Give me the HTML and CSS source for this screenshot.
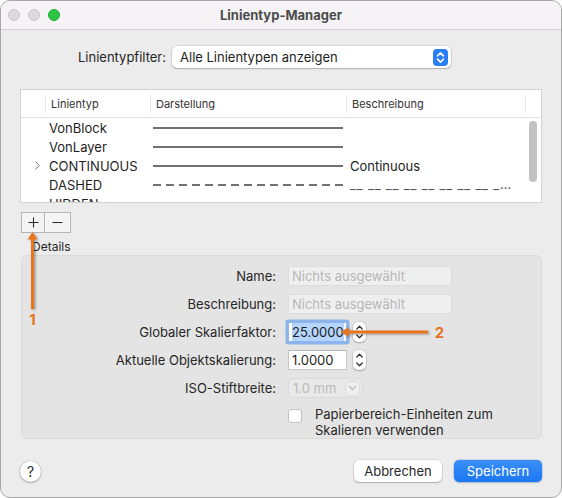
FILE: index.html
```html
<!DOCTYPE html>
<html lang="de">
<head>
<meta charset="utf-8">
<title>Linientyp-Manager</title>
<link rel="stylesheet" href="styles.css">
</head>
<body>
<div class="window">
  <div class="titlebar">
    <div class="lights">
      <span class="light gray"></span>
      <span class="light gray"></span>
      <span class="light green"></span>
    </div>
    <div class="title">Linientyp-Manager</div>
  </div>

  <div class="content">
    <div class="filter">
      <span class="filter-label">Linientypfilter:</span>
      <div class="popup">
        <span>Alle Linientypen anzeigen</span>
        <svg class="popup-btn" width="15" height="17" viewBox="0 0 15 17"><rect width="15" height="17" rx="4" fill="#2b7ff6"/><path d="M4.5 6.8 L7.5 3.9 L10.5 6.8 M4.5 10.2 L7.5 13.1 L10.5 10.2" fill="none" stroke="#fff" stroke-width="1.6" stroke-linecap="round" stroke-linejoin="round"/></svg>
      </div>
    </div>

    <div class="table">
      <div class="thead">
        <div class="th first"></div>
        <div class="th">Linientyp</div>
        <div class="th">Darstellung</div>
        <div class="th">Beschreibung</div>
        <div class="th last"></div>
      </div>
      <div class="tbody">
        <div class="rows">
          <div class="row">
            <div class="cell"></div>
            <div class="cell name">VonBlock</div>
            <div class="cell"><span class="sample solid"></span></div>
            <div class="cell desc"></div>
          </div>
          <div class="row">
            <div class="cell"></div>
            <div class="cell name">VonLayer</div>
            <div class="cell"><span class="sample solid"></span></div>
            <div class="cell desc"></div>
          </div>
          <div class="row">
            <div class="cell chev"><svg width="5" height="9" viewBox="0 0 5 9"><path d="M0.6 0.6 L4.2 4.5 L0.6 8.4" fill="none" stroke="#6e6e6e" stroke-width="1"/></svg></div>
            <div class="cell name">CONTINUOUS</div>
            <div class="cell"><span class="sample solid"></span></div>
            <div class="cell desc">Continuous</div>
          </div>
          <div class="row">
            <div class="cell"></div>
            <div class="cell name">DASHED</div>
            <div class="cell"><span class="sample dashed"></span></div>
            <div class="cell desc dashdesc">__ __ __ __ __ __ __ __ _…</div>
          </div>
          <div class="row">
            <div class="cell"></div>
            <div class="cell name">HIDDEN</div>
            <div class="cell"></div>
            <div class="cell desc"></div>
          </div>
        </div>
        <div class="scroll"><div class="thumb"></div></div>
      </div>
    </div>

    <div class="seg">
      <div class="seg-btn plus"><svg width="11" height="11" viewBox="0 0 11 11"><path d="M5.5 0.5 V10.5 M0.5 5.5 H10.5" stroke="#2a2a2a" stroke-width="1.1"/></svg></div>
      <div class="seg-btn minus"><svg width="11" height="11" viewBox="0 0 11 11"><path d="M0.5 5.5 H10.5" stroke="#2a2a2a" stroke-width="1.1"/></svg></div>
    </div>

    <div class="details-label">Details</div>

    <div class="details">
      <div class="label">Name:</div>
      <div class="field"><div class="input disabled wide">Nichts ausgewählt</div></div>

      <div class="label">Beschreibung:</div>
      <div class="field"><div class="input disabled wide">Nichts ausgewählt</div></div>

      <div class="label">Globaler Skalierfaktor:</div>
      <div class="field">
        <div class="input num focus"><span class="sel">25.0000</span></div>
        <svg class="stepper" width="13" height="20" viewBox="0 0 13 20"><path d="M3.8 7 L6.5 4.3 L9.2 7 M3.8 13 L6.5 15.7 L9.2 13" fill="none" stroke="#333" stroke-width="1.3" stroke-linecap="round" stroke-linejoin="round"/></svg>
      </div>

      <div class="label">Aktuelle Objektskalierung:</div>
      <div class="field">
        <div class="input num">1.0000</div>
        <svg class="stepper" width="13" height="20" viewBox="0 0 13 20"><path d="M3.8 7 L6.5 4.3 L9.2 7 M3.8 13 L6.5 15.7 L9.2 13" fill="none" stroke="#333" stroke-width="1.3" stroke-linecap="round" stroke-linejoin="round"/></svg>
      </div>

      <div class="label">ISO-Stiftbreite:</div>
      <div class="field">
        <div class="iso">
          <span>1.0 mm</span>
          <span class="iso-btn"><svg width="9" height="6" viewBox="0 0 9 6"><path d="M1 1 L4.5 4.5 L8 1" fill="none" stroke="#b9b9b9" stroke-width="1.2"/></svg></span>
        </div>
      </div>

      <div class="label"></div>
      <div class="field check-row">
        <span class="checkbox"></span>
        <span class="check-label">Papierbereich-Einheiten zum<br>Skalieren verwenden</span>
      </div>
    </div>

    <div class="footer">
      <div class="help">?</div>
      <div class="actions">
        <div class="btn">Abbrechen</div>
        <div class="btn primary">Speichern</div>
      </div>
    </div>
  </div>

  <svg class="annotations" width="562" height="498" viewBox="0 0 562 498">
    <defs>
      <filter id="sh" x="-50%" y="-50%" width="200%" height="200%">
        <feDropShadow dx="1.5" dy="1" stdDeviation="1" flood-color="#000" flood-opacity="0.35"/>
      </filter>
    </defs>
    <g filter="url(#sh)" fill="#e8741e" stroke="none">
      <rect x="31" y="237" width="3" height="72"/>
      <polygon points="32.5,232 27.5,239.5 37.5,239.5"/>
      <rect x="347" y="330.5" width="81" height="3"/>
      <polygon points="341,332 348.5,327 348.5,337"/>
    </g>
    <text x="32.5" y="325" class="ann-num" text-anchor="middle">1</text>
    <text x="439.5" y="338" class="ann-num" text-anchor="middle">2</text>
  </svg>
</div>
</body>
</html>
```

FILE: styles.css
```css
* { box-sizing: border-box; }

html, body {
  margin: 0;
  padding: 0;
  background: #ffffff;
}

body {
  font-family: "Inter", "Liberation Sans", sans-serif;
  font-size: 13px;
  color: #262626;
}

.window {
  position: relative;
  width: 562px;
  height: 498px;
  border: 1px solid #a8a8a8;
  border-radius: 10px;
  overflow: hidden;
  background: #ececec;
}

.titlebar {
  position: relative;
  height: 29px;
  background: #f5f3f5;
  border-bottom: 1px solid #d3d1d3;
  display: flex;
  align-items: center;
  justify-content: center;
}

.lights {
  position: absolute;
  left: 7px;
  top: 8px;
  display: flex;
  gap: 8px;
}

.light {
  width: 12px;
  height: 12px;
  border-radius: 50%;
  display: block;
}

.light.gray {
  background: #dcdadc;
  border: 1px solid #c9c7c9;
}

.light.green {
  background: #2bc541;
  border: 1px solid #22ad36;
}

.title {
  font-weight: 700;
  font-size: 13px;
  color: #4b4b4b;
}

.content {
  padding: 0 19px 0 19px;
}

/* filter */
.filter {
  display: flex;
  align-items: center;
  gap: 6px;
  margin: 16px 0 0 58px;
}

.filter-label {
  color: #262626;
}

.popup {
  width: 279px;
  height: 22px;
  background: #fff;
  border-radius: 5px;
  box-shadow: 0 0 0 0.5px rgba(0,0,0,0.18), 0 1px 1.5px rgba(0,0,0,0.18);
  display: flex;
  align-items: center;
  justify-content: space-between;
  padding: 0 3px 0 8px;
  color: #1e1e1e;
}

.popup-btn { display: block; }

/* table */
.table {
  margin-top: 21px;
  height: 114px;
  background: #fff;
  border: 1px solid #d3d3d3;
  display: flex;
  flex-direction: column;
}

.thead {
  display: grid;
  grid-template-columns: 24px 105px 196px 179px 1fr;
  height: 28px;
  border-bottom: 1px solid #e2e2e2;
  align-items: center;
  font-size: 11px;
  color: #333;
}

.th {
  height: 18px;
  line-height: 18px;
  padding-left: 5px;
  border-left: 1px solid #e3e3e3;
}

.th.first { border-left: none; }

.tbody {
  flex: 1;
  display: flex;
  overflow: hidden;
}

.rows {
  flex: 1;
  overflow: hidden;
}

.row {
  display: grid;
  grid-template-columns: 24px 105px 196px 179px;
  height: 19px;
  align-items: center;
}

.cell {
  white-space: nowrap;
  overflow: hidden;
  height: 19px;
  display: flex;
  align-items: center;
}

.cell.name { padding-left: 4px; color: #1e1e1e; }
.cell.chev { padding-left: 14px; }
.cell.desc { padding-left: 4px; color: #1e1e1e; }

.cell.dashdesc {
  align-items: flex-end;
  padding-bottom: 4px;
  font-size: 13px;
  letter-spacing: 0.8px;
  color: #555;
  line-height: 12px;
}

.sample {
  display: block;
  margin-left: 3px;
  width: 190px;
  height: 2px;
}

.sample.solid { background: #717171; }

.sample.dashed {
  background: repeating-linear-gradient(to right, #717171 0 8px, transparent 8px 13px);
}

.scroll {
  width: 16px;
  padding: 3px 0 0 4px;
}

.thumb {
  width: 8px;
  height: 61px;
  border-radius: 4px;
  background: #c2c2c2;
}

/* + / - */
.seg {
  display: flex;
  margin-top: 9px;
  margin-left: 1px;
  width: 50px;
  height: 21px;
  border: 1px solid #b5b5b5;
  background: #f4f4f4;
}

.seg-btn {
  display: flex;
  align-items: center;
  justify-content: center;
  height: 100%;
}

.seg-btn.plus { width: 23px; border-right: 1px solid #b5b5b5; }
.seg-btn.minus { flex: 1; }
.seg-btn svg { display: block; }

.details-label {
  height: 16px;
  line-height: 16px;
  margin-top: 6px;
  padding-left: 12px;
  font-size: 12px;
  color: #262626;
}

.details {
  margin-left: 1px;
  height: 184px;
  background: #e4e4e4;
  border: 1px solid #d9d9d9;
  border-radius: 6px;
  padding-top: 10px;
  display: grid;
  grid-template-columns: 254px auto;
  grid-auto-rows: 20px;
  row-gap: 8px;
  column-gap: 12px;
  align-content: start;
}

.label {
  text-align: right;
  line-height: 20px;
  color: #262626;
  white-space: nowrap;
}

.field {
  display: flex;
  align-items: center;
  gap: 6px;
}

.input {
  height: 20px;
  line-height: 18px;
  padding-left: 3px;
  border: 1px solid #c6c6c6;
  border-top-color: #b7b7b7;
  background: #fff;
  color: #1e1e1e;
  white-space: nowrap;
}

.input.wide { width: 164px; }

.input.disabled {
  background: #efefef;
  border-color: #dcdcdc;
  color: #b7b7b7;
}

.input.num { width: 59px; }

.input.focus {
  border-color: #8fb5ea;
  box-shadow: 0 0 0 2.5px #8db3ec;
  border-radius: 1px;
}

.sel {
  background: #b4d5fe;
  padding: 1px 0;
}

.stepper {
  display: block;
  background: #fff;
  border-radius: 5px;
  box-shadow: 0 0 0 0.5px rgba(0,0,0,0.18), 0 1px 1.5px rgba(0,0,0,0.2);
}

.iso {
  width: 75px;
  height: 20px;
  border-radius: 5px;
  background: #e9e9e9;
  border: 1px solid #dadada;
  display: flex;
  align-items: center;
  justify-content: space-between;
  padding: 0 2px 0 4px;
  color: #b9b9b9;
}

.iso-btn {
  width: 15px;
  height: 15px;
  border-radius: 4px;
  background: #efefef;
  border: 1px solid #dcdcdc;
  display: flex;
  align-items: center;
  justify-content: center;
}

.iso-btn svg { display: block; }

.check-row {
  align-items: flex-start;
  gap: 13px;
  height: 32px;
}

.checkbox {
  display: block;
  width: 14px;
  height: 14px;
  margin-top: 3px;
  background: #fff;
  border: 1px solid #c2c2c2;
  border-radius: 3px;
  flex: none;
}

.check-label {
  line-height: 16px;
  color: #262626;
  white-space: nowrap;
}

/* footer */
.footer {
  display: flex;
  justify-content: space-between;
  align-items: center;
  margin-top: 21px;
  padding-right: 0;
}

.help {
  width: 21px;
  height: 21px;
  border-radius: 50%;
  background: #fff;
  box-shadow: 0 0 0 0.5px rgba(0,0,0,0.15), 0 1px 2px rgba(0,0,0,0.25);
  display: flex;
  align-items: center;
  justify-content: center;
  font-size: 14px;
  color: #2a2a2a;
}

.actions {
  display: flex;
  gap: 12px;
}

.btn {
  width: 88px;
  height: 22px;
  line-height: 22px;
  text-align: center;
  background: #fff;
  border-radius: 5px;
  box-shadow: 0 0 0 0.5px rgba(0,0,0,0.15), 0 1px 1.5px rgba(0,0,0,0.2);
  color: #262626;
}

.btn.primary {
  background: linear-gradient(#3a8ef8, #1b78f2);
  color: #fff;
  box-shadow: 0 0 0 0.5px rgba(0,80,200,0.3), 0 1px 1.5px rgba(0,0,0,0.15);
}

/* annotation overlay */
.annotations {
  position: absolute;
  left: -1px;
  top: -1px;
  pointer-events: none;
}

.ann-num {
  font-family: "Inter", "Liberation Sans", sans-serif;
  font-weight: 700;
  font-size: 15px;
  fill: #e8741e;
}
```
